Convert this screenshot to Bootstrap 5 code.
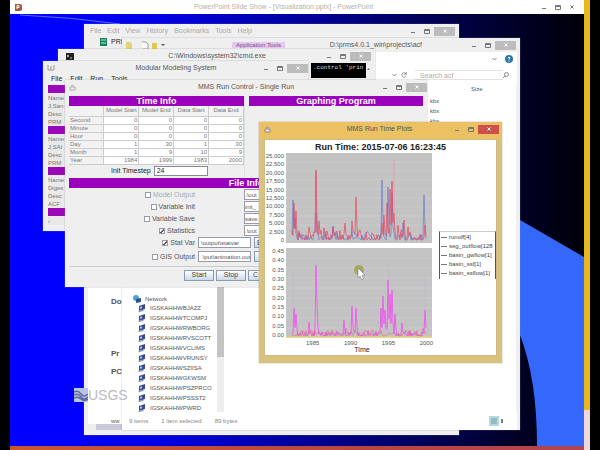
<!DOCTYPE html>
<html lang="en">
<head>
<meta charset="utf-8">
<meta name="viewport" content="width=device-width, initial-scale=1">
<title>Run Time Plots</title>
<link href="https://cdn.jsdelivr.net/npm/bootstrap@5.3.0/dist/css/bootstrap.min.css" rel="stylesheet">
<style>
body{font-family:"Liberation Sans",sans-serif;font-size:7px;line-height:8px;color:#555;background:#000}
button,input{font:inherit;color:inherit;padding:0;margin:0;line-height:8px}
a{color:inherit;text-decoration:none}
.screen{min-height:100vh;padding-left:10px;padding-right:10px}
.edge{width:6px;background:linear-gradient(#e8b820 0 410px,#f0d8d8 410px)}
.showbar{height:14px;background:#fff;color:#b5b0a8;padding:0 5px}
.taskstrip{height:4px;background:linear-gradient(90deg,#c8582c,#b84a3c 50%,#b04450)}
.desk{position:relative;background:#00f;overflow:hidden}
.backdrop{position:absolute;inset:0;width:100%;height:100%}
.win{position:absolute;background:#efefef;overflow:hidden;box-shadow:0 0 1px #889}
.tbar{height:14px;flex:none}
.tbar h2{font-size:7px;line-height:10px;font-weight:400;margin:0;color:#555;padding-left:38px}
.tbar h2.path{padding-left:0}
.apptab{background:#e2c8ec;color:#7d4c93;font-size:6px}
.ctl{border:0;background:none;width:14px;height:9px;display:flex;align-items:center;justify-content:center;color:#777}
.ctl svg{width:6px;height:6px;display:block}
.ctl.shut{width:21px;background:#bcbcbc;color:#fff}
.w-doc{left:74px;top:10px;width:375px;height:411px}
.w-files{left:112px;top:24px;width:398px;height:392px}
.w-cmd{left:48px;top:35px;width:317px;height:150px}
.w-model{left:33px;top:47px;width:265px;height:170px}
.w-run{left:55px;top:66px;width:362px;height:207px}
.w-plot{left:249px;top:108px;width:243px;height:241px;background:#d9c27c;padding:0 5px 6px;box-shadow:0 0 1px #875}
.w-plot .tbar{height:17px;background:#ebc163;margin:0 -5px;padding:0 3px 3px 5px}
.w-plot .shut{background:#cb504c}
.w-doc .menu{color:#aaa;gap:6px;padding-left:6px}
.docbody{background:#fff;margin:239px 4px 0;padding:12px 0 0 23px;height:139px}
.docbody p{font-weight:700;font-size:8px;line-height:10px;margin:0 0 42px}
.docbody p.tight{margin-bottom:8px}
.docbody p.last{margin-bottom:40px}
.docbody span{font-size:6px}
.hscroll{height:7px;background:#eee;padding-left:8px;margin:0 4px}
.hscroll i{display:block;width:130px;height:6px;background:#c8c8d8}
.watermark{position:absolute;left:64px;top:373px;color:#bbb;font-size:14px;line-height:16px}
.watermark svg{width:14px;height:14px}
.ribbon{height:14px;background:#fff;margin-right:3px;padding-right:4px}
.addr{height:19px;background:#fff;margin-right:3px;padding:0 8px}
.addr input{width:88px;height:10px;border:1px solid #e2e2e2;border-width:1px 0;padding-left:5px;color:#aaa}
.addr input::placeholder{color:#aaa;opacity:1}
.tree{width:95px;padding:210px 0 0 11px;background:#fff;font-size:6px}
.tree ul{margin:0;padding:0 0 0 5px}
.tree li{list-style:none;height:10px;line-height:10px;white-space:nowrap}
.tree svg{width:8px;height:8px;flex:none}
.vscroll{width:7px;background:#eee;margin-top:182px}
.vscroll i{display:block;height:90px;background:#c4c4c4}
.column{padding-left:206px;font-size:6px}
.column .heading{padding-left:41px}
.column .dates{line-height:10px;margin-top:3px}
.status{height:18px;background:#fff;margin-right:3px;color:#888;padding:0 14px 0 7px;gap:13px;font-size:6px}
.console{background:#000;color:#ddd;flex:none;width:55px;height:15px;font-family:"Liberation Mono",monospace;font-size:6px;line-height:9px;padding-left:2px;white-space:nowrap}
.side{background:#e9e9e9;margin:2px 0 0 5px;width:60px;color:#777;font-size:6px}
.side b{display:block;height:8px;background:#9a08b8;margin-bottom:1px}
.side span{display:block}
.band{background:#9a00bb;color:#fff;font-weight:700;font-size:9px;line-height:10px;text-align:center;height:10px;margin:0}
.titles{padding-top:2px}
.files{margin:1px 0}
.times{width:176px}
.times table{width:100%;height:54px;background:#fff;font-size:6px;line-height:7px;color:#777;table-layout:fixed}
.times th,.times td{padding:0 1px;border:solid #ccc;border-width:0 1px 1px 0;font-weight:400;height:7px}
.times thead th{text-align:center;background:#f2f2f2;height:10px;white-space:nowrap}
.times tbody th{background:#f2f2f2}
.times td{text-align:right}
.step{height:12px;gap:3px;padding-left:42px}
.step input{width:54px;height:10px;border:1px solid #889;background:#fff;padding-left:2px}
.opt{height:12px;gap:3px}
.opt.last{margin-top:2px}
.opt .who{width:126px;gap:2px;white-space:nowrap;color:#555}
.opt .off{color:#aaa}
.opt input[type=checkbox]{width:6px;height:6px;appearance:none;border:1px solid #99a;background:#fff}
.opt input[type=checkbox]:checked{background:linear-gradient(135deg,#fff 40%,#556 40% 65%,#fff 65%)}
.opt input[type=text]{width:53px;height:11px;border:1px solid #99a;background:#fff;padding-left:2px;font-size:6px}
.opt input.far{margin-left:46px;padding:0}
.opt .push{text-align:left;padding-left:2px}
.push{height:11px;width:30px;border:1px solid #8a9bb0;background:linear-gradient(#fff,#c9d9ea);color:#444}
.acts{border-top:1px solid #ccc;margin-top:3px;padding:3px 0 0 115px;gap:2px}
.paper{background:#fff;height:217px;border:1px solid #cdb98a;padding-top:1px}
.paper h3{font-size:9px;line-height:12px;font-weight:700;color:#222;margin:0;text-align:center}
.upper{margin-bottom:5px}
.ticks{width:21px;font-size:6px;line-height:6px;text-align:right;color:#555;padding-right:2px}
.graph{width:146px;height:90px;display:block;background:#c3c3c3}
.years{padding:2px 2px 0 41px;width:170px;font-size:6px;line-height:6px}
.key{border:solid #555;border-width:1px 1px 0;border-top-color:#ccc;width:58px;height:48px;margin:78px 0 0 4px;padding:1px 0 0 1px;color:#444;font-size:6px}
.key div{height:9px;line-height:9px;white-space:nowrap;display:flex;align-items:center;gap:2px}
.key i{width:6px;height:1px;background:#777;flex:none}
.cursor{position:absolute;left:344px;top:251px;width:14px;height:16px}
</style>
<script src="https://cdn.jsdelivr.net/npm/bootstrap@5.3.0/dist/js/bootstrap.bundle.min.js"></script>
</head>
<body>
<svg width="0" height="0" class="d-none">
<symbol id="min" viewBox="0 0 6 6"><path d="M1 4.500h4" stroke="currentColor" fill="none"/></symbol>
<symbol id="max" viewBox="0 0 6 6"><path d="M.5 1.500h5v4h-5z M.5 2.500h5" stroke="currentColor" fill="none"/></symbol>
<symbol id="shut" viewBox="0 0 6 6"><path d="M1.500 1.500l3 3m0-3l-3 3" stroke="currentColor" fill="none"/></symbol>
<symbol id="pc" viewBox="0 0 8 8"><path d="M1 2l6-2v5l-6 2z" fill="#3b4a8c"/><path d="M2 3l2-.7v2L2 5z" fill="#a9cdf0"/><path d="M0 7l5-1 1 1-5 1z" fill="#8895ab"/></symbol>
</svg>
<div class="screen d-flex">
<div class="d-flex flex-column flex-grow-1">
<header class="showbar d-flex align-items-center">
<svg width="7" height="8" viewBox="0 0 7 8"><path d="M0 1h5l2 1v5l-2 1H0z" fill="#a65a44"/><path d="M2 6V2.500h2v2H2" stroke="#fff" fill="none"/></svg>
<span class="flex-grow-1 text-center text-nowrap ps-2">PowerPoint Slide Show - [Visualization.pptx] - PowerPoint</span>
<button class="ctl" aria-label="Minimize"><svg><use href="#min"/></svg></button><button class="ctl" aria-label="Restore"><svg><use href="#max"/></svg></button><button class="ctl" aria-label="Close"><svg><use href="#shut"/></svg></button>
</header>
<main class="desk flex-grow-1">
<svg class="backdrop" viewBox="0 0 574 432" preserveAspectRatio="none">
<defs><linearGradient id="night"><stop offset="0" stop-color="#0000ff"/><stop offset=".25" stop-color="#0000e8"/><stop offset=".6" stop-color="#000080"/><stop offset=".85" stop-color="#000030"/><stop offset="1" stop-color="#000008"/></linearGradient></defs>
<path d="M0 0H574V432H0z" fill="url(#night)"/>
<path d="M0 0Q60 2 120 12L74 16V432H0z" fill="#00f"/>
<path d="M10 1Q60 3 110 10" stroke="#5070ff" fill="none"/>
<path d="M490 195L510 206L574 243V432H527Q527 365 510 321L490 280z" fill="#3468fb"/>
</svg>

<section class="win w-doc">
<div class="tbar d-flex align-items-center"><div class="menu d-flex flex-grow-1"><a href="#">File</a><a href="#">Edit</a><a href="#">View</a><a href="#">History</a><a href="#">Bookmarks</a><a href="#">Tools</a><a href="#">Help</a></div>
<button class="ctl" aria-label="Minimize"><svg><use href="#min"/></svg></button><button class="ctl" aria-label="Restore"><svg><use href="#max"/></svg></button><button class="ctl shut me-1" aria-label="Close"><svg><use href="#shut"/></svg></button></div>
<div class="d-flex align-items-center ps-3"><svg width="7" height="8" viewBox="0 0 7 8"><path d="M0 0h7v8H0z" fill="#16805c"/><path d="M1 2h5M1 5h5" stroke="#bfe8d2"/></svg><span class="ps-1 text-dark">PRI</span></div>
<div class="docbody"><p>Do</p><p class="tight">Pr</p><p class="last">PC</p><span>ww</span></div>
<div class="hscroll"><i></i></div>
</section>

<section class="win w-files d-flex flex-column">
<div class="tbar d-flex align-items-center">
<svg class="ms-1" width="42" height="9" viewBox="0 0 42 9"><path d="M0 1h4l2 2v6H0z" fill="#e4d372"/><path d="M16 1h4l2 2v5h-5" stroke="#999" fill="#fff"/><path d="M26 2h5v6h-5z" fill="#dfc94e"/><path d="M35 3h4l-2 2z" fill="#555"/></svg>
<span class="ms-5 ps-3"><span class="apptab px-1">Application Tools</span></span>
<h2 class="path flex-grow-1 text-center">D:\prms4.0.1_win\projects\acf</h2>
<button class="ctl" aria-label="Minimize"><svg><use href="#min"/></svg></button><button class="ctl" aria-label="Restore"><svg><use href="#max"/></svg></button><button class="ctl shut me-1" aria-label="Close"><svg><use href="#shut"/></svg></button></div>
<div class="ribbon d-flex align-items-center justify-content-end gap-2"><svg width="5" height="4" viewBox="0 0 5 4"><path d="M.5 1l2 2 2-2" stroke="#888" fill="none"/></svg><svg width="8" height="8" viewBox="0 0 8 8"><circle cx="4" cy="4" r="4" fill="#287aac"/><path d="M3 3q1-2 2 0L4 4.500M4 5.500v1" stroke="#fff" fill="none"/></svg></div>
<div class="addr d-flex align-items-center justify-content-end"><svg class="me-1" width="5" height="4" viewBox="0 0 5 4"><path d="M.5 1l2 2 2-2" stroke="#888" fill="none"/></svg><svg class="me-2" width="6" height="6" viewBox="0 0 8 8"><path d="M7 3A3 3 0 1 0 7 5M7 0v3H4" stroke="#777" fill="none"/></svg><input type="text" placeholder="Search acf" aria-label="Search acf"><svg width="6" height="6" viewBox="0 0 6 6"><circle cx="3.500" cy="2.500" r="2" stroke="#888" fill="none"/><path d="M2 4L0 6" stroke="#888"/></svg></div>
<div class="d-flex flex-grow-1 bg-white me-1 overflow-hidden">
<nav class="tree"><div class="d-flex align-items-center gap-1 mb-0"><svg viewBox="0 0 8 8"><circle cx="3" cy="3" r="3" fill="#4aa4c7"/><path d="M3 4l5-1v4l-5 1z" fill="#324f94"/></svg><a href="#">Network</a></div>
<ul id="hosts"></ul></nav>
<div class="vscroll"><i></i></div>
<div class="column"><div class="heading">Size</div><div class="dates">kbx<br>kbx<br>kbx</div></div>
</div>
<div class="status d-flex align-items-center"><span>9 items</span><span>1 item selected</span><span>89 bytes</span><svg class="ms-auto" width="14" height="10" viewBox="0 0 14 10"><path d="M0 0h10v10H0z" fill="#b5dadd"/><path d="M2 3h6M2 5h6M2 7h6" stroke="#70a0a8"/><path d="M12 3h2v4h-2z" fill="#6a8790"/></svg></div>
</section>

<section class="win w-cmd">
<div class="tbar d-flex align-items-center ps-2"><svg width="8" height="7" viewBox="0 0 8 7"><path d="M0 0h8v7H0z" fill="#222"/><path d="M1 2l2 1-2 1m3 1h2" stroke="#ccc" fill="none"/></svg>
<h2 class="flex-grow-1 text-center">C:\Windows\system32\cmd.exe</h2>
<button class="ctl" aria-label="Minimize"><svg><use href="#min"/></svg></button><button class="ctl" aria-label="Restore"><svg><use href="#max"/></svg></button><button class="ctl shut me-1" aria-label="Close"><svg><use href="#shut"/></svg></button></div>
<div class="d-flex justify-content-end pe-1"><div class="console">.control 'prin</div><svg class="mt-1" width="5" height="4" viewBox="0 0 5 4"><path d="M1 3l1.500-2L4 3z" fill="#777"/></svg></div>
</section>

<section class="win w-model">
<div class="tbar d-flex align-items-center ps-1"><svg width="8" height="6" viewBox="0 0 8 6"><path d="M1 0v5h6V0M4 1v4" stroke="#999" fill="none"/></svg>
<h2 class="flex-grow-1 text-center">Modular Modeling System</h2>
<button class="ctl" aria-label="Minimize"><svg><use href="#min"/></svg></button><button class="ctl" aria-label="Restore"><svg><use href="#max"/></svg></button><button class="ctl shut" aria-label="Close"><svg><use href="#shut"/></svg></button></div>
<div class="d-flex gap-2 ps-2 text-dark"><a href="#">File</a><a href="#">Edit</a><a href="#">Run</a><a href="#">Tools</a></div>
<div class="side"><b></b><span>Name</span><span>J.San</span><span>Desc</span><span>PRM</span><b></b><span>Name</span><span>J.SAI</span><span>Desc</span><span>PRM</span><b></b><span>Name</span><span>Diges</span><span>Desc</span><span>ACF</span><b></b><span>‹</span></div>
</section>

<section class="win w-run">
<div class="tbar d-flex align-items-center ps-1"><svg width="7" height="7" viewBox="0 0 7 7"><path d="M1 3h5v3H1zM2 2q2-2 3 0" stroke="#aaa" fill="none"/></svg>
<h2 class="flex-grow-1 text-center">MMS Run Control - Single Run</h2>
<button class="ctl" aria-label="Minimize"><svg><use href="#min"/></svg></button><button class="ctl" aria-label="Restore"><svg><use href="#max"/></svg></button><button class="ctl shut" aria-label="Close"><svg><use href="#shut"/></svg></button></div>
<div class="px-1">
<div class="titles d-flex align-items-start">
<div class="times border-end"><h3 class="band">Time Info</h3>
<table><thead><tr><th></th><th>Model Start</th><th>Model End</th><th>Data Start</th><th>Data End</th></tr></thead><tbody>
<tr><th>Second</th><td>0</td><td>0</td><td>0</td><td>0</td></tr>
<tr><th>Minute</th><td>0</td><td>0</td><td>0</td><td>0</td></tr>
<tr><th>Hour</th><td>0</td><td>0</td><td>0</td><td>0</td></tr>
<tr><th>Day</th><td>1</td><td>30</td><td>1</td><td>30</td></tr>
<tr><th>Month</th><td>1</td><td>9</td><td>10</td><td>9</td></tr>
<tr><th>Year</th><td>1984</td><td>1999</td><td>1983</td><td>2000</td></tr></tbody></table>
<div class="step d-flex align-items-center text-dark"><label for="dt">Init Timestep</label><input id="dt" type="text" value="24"></div></div>
<h3 class="band flex-grow-1 ms-1">Graphing Program</h3>
</div>
<h3 class="band files">File Info</h3>
<div class="opt d-flex align-items-center"><label class="who d-flex align-items-center justify-content-end off"><input type="checkbox" disabled>Model Output</label><input class="far" type="text" aria-label="Model output file" value=".\out"></div>
<div class="opt d-flex align-items-center"><label class="who d-flex align-items-center justify-content-end"><input type="checkbox">Variable Init</label><input class="far" type="text" aria-label="Init file" value="init_"></div>
<div class="opt d-flex align-items-center"><label class="who d-flex align-items-center justify-content-end"><input type="checkbox">Variable Save</label><input class="far" type="text" aria-label="Save file" value="save"></div>
<div class="opt d-flex align-items-center"><label class="who d-flex align-items-center justify-content-end"><input type="checkbox" checked>Statistics</label><input class="far" type="text" aria-label="Statistics file" value=".\out"></div>
<div class="opt d-flex align-items-center"><label class="who d-flex align-items-center justify-content-end"><input type="checkbox" checked>Stat Var</label><input type="text" aria-label="Stat var file" value="\output\statvar"><button class="push" aria-label="Browse">B</button></div>
<div class="opt last d-flex align-items-center"><label class="who d-flex align-items-center justify-content-end"><input type="checkbox">GIS Output</label><input type="text" aria-label="GIS file" value=".\put\animation.out"><button class="push" aria-label="Browse"></button></div>
<div class="acts d-flex"><button class="push">Start</button><button class="push">Stop</button><button class="push text-start ps-1" aria-label="Close">C</button></div>
</div>
</section>

<section class="win w-plot">
<div class="tbar d-flex align-items-center"><svg width="7" height="7" viewBox="0 0 7 7"><path d="M1 3h5v3H1zM2 2q2-2 3 0" stroke="#888" fill="#eee"/></svg>
<h2 class="flex-grow-1 text-center">MMS Run Time Plots</h2>
<button class="ctl" aria-label="Minimize"><svg><use href="#min"/></svg></button><button class="ctl" aria-label="Maximize"><svg><use href="#max"/></svg></button><button class="ctl shut" aria-label="Close"><svg><use href="#shut"/></svg></button></div>
<div class="paper">
<h3>Run Time: 2015-07-06 16:23:45</h3>
<div class="d-flex">
<div>
<div class="upper d-flex"><div class="ticks d-flex flex-column justify-content-between"><span>25,000</span><span>22,500</span><span>20,000</span><span>17,500</span><span>15,000</span><span>12,500</span><span>10,000</span><span>7,500</span><span>5,000</span><span>2,500</span><span>0</span></div><svg id="flow" class="graph" viewBox="0 0 146 90" preserveAspectRatio="none"></svg></div>
<div class="d-flex"><div class="ticks d-flex flex-column justify-content-between"><span>0.45</span><span>0.40</span><span>0.35</span><span>0.30</span><span>0.25</span><span>0.20</span><span>0.15</span><span>0.10</span><span>0.05</span><span>0.00</span></div><svg id="depth" class="graph" viewBox="0 0 146 90" preserveAspectRatio="none"></svg></div>
<div class="years d-flex justify-content-between"><span>1985</span><span>1990</span><span>1995</span><span>2000</span></div>
<div class="text-center ps-4 text-dark">Time</div>
</div>
<div class="key"><div><i></i>runoff[4]</div><div><i></i>seg_outflow[128</div><div><i></i>basin_gwflow[1]</div><div><i></i>basin_ssf[1]</div><div><i></i>basin_ssflow[1]</div></div>
</div>
</div>
</section>

<div class="watermark d-flex align-items-center"><svg viewBox="0 0 14 14"><path d="M0 0h14v14H0z" fill="#b9c4e8"/><path d="M0 4q4-2 7 2t7 0M0 7q4-2 7 2t7 0M0 10q4-2 7 1t7 0" stroke="#5c6a9c" fill="none" stroke-width="1.500"/></svg><span>USGS</span></div>
<svg class="cursor" viewBox="0 0 14 16"><circle cx="5" cy="5" r="5" fill="#9aa24a" opacity=".8"/><path d="M4 3l7 7-3 .3 1.500 3.500-2 .8L6 11l-2 2z" fill="#fff" stroke="#777" stroke-width=".6"/></svg>
</main>
<footer class="taskstrip"></footer>
</div>
<div class="edge"></div>
</div>
<script>
document.getElementById('hosts').innerHTML = ['IGSKAHHWBJAZZ','IGSKAHHWTCOMPJ','IGSKAHHWRWBORG','IGSKAHHWRVSCOTT','IGSKAHHWVCLIMS','IGSKAHHWVRUNSY','IGSKAHHWSZIISA','IGSKAHHWGKWSM','IGSKAHHWPSZPRCO','IGSKAHHWPSSST2','IGSKAHHWPWRD']
  .map(n => '<li class="d-flex align-items-center gap-1"><svg><use href="#pc"/></svg><a href="#">' + n + '</a></li>').join('');

// Each series is a low noisy baseline with storm peaks given as [x, y].
function series(peaks, base, swing, seed) {
  const y = [];
  for (let x = 6; x <= 140; x++) {
    seed = (seed * 9301 + 49297) % 233280;
    y[x] = base - swing * Math.pow(seed / 233280, 2);
  }
  peaks.forEach(([x, top]) => {
    y[x] = top;
    if (x < 140) y[x + 1] = Math.min(y[x + 1], base - (base - top) * .3);
    if (x > 6) y[x - 1] = Math.min(y[x - 1], base - (base - top) * .12);
  });
  return 'M' + y.map((v, x) => x + ' ' + v.toFixed(1)).filter(Boolean).join('L');
}
const line = (d, c, w, o) => `<path d="${d}" stroke="${c}" stroke-width="${w}" opacity="${o}" fill="none"/>`;
const rules = n => Array.from({length: n - 1}, (_, i) => line(`M0 ${(i + 1) * 90 / n}H146`, '#d6d6d6', .5, .8)).join('');
const wet = [[8,50],[10,58],[23,74],[30,17],[33,68],[38,75],[47,74],[59,70],[66,68],[70,44],[96,70],[98,62],[101,50],[104,36],[106,28],[108,60],[112,72],[118,67],[122,74],[139,72]];
document.getElementById('flow').innerHTML = rules(10)
  + line(series([[7,47],[9,65],[30,60],[47,73],[96,27],[102,34],[106,40],[117,70],[138,42]], 87, 9, 7), '#6672c8', .8, .8)
  + line(series(wet, 87, 11, 43), '#e24a60', .9, .8)
  + line('M108 60V7', '#f08a9c', .8, .8) + line('M30 80V17', '#ef5066', 1, .8);
document.getElementById('depth').innerHTML = rules(9)
  + line(series([[8,60],[10,66],[23,74],[30,17],[31,55],[58,72],[66,58],[70,60],[95,60],[97,48],[99,62],[102,32],[104,46],[106,42],[109,66],[116,75],[139,62]], 88, 5, 11), '#ee55ee', 1, .85)
  + line(series([[36,84],[46,82],[60,80],[86,82],[120,82],[137,80]], 88, 6, 99), '#ec5577', .7, .7)
  + line('M7 60V25M139 60V28M103 32V20', '#cfa0d8', .6, .8)
  + line('M0 89.500H146', '#f0d878', 1.500, 1);
</script>
</body>
</html>
